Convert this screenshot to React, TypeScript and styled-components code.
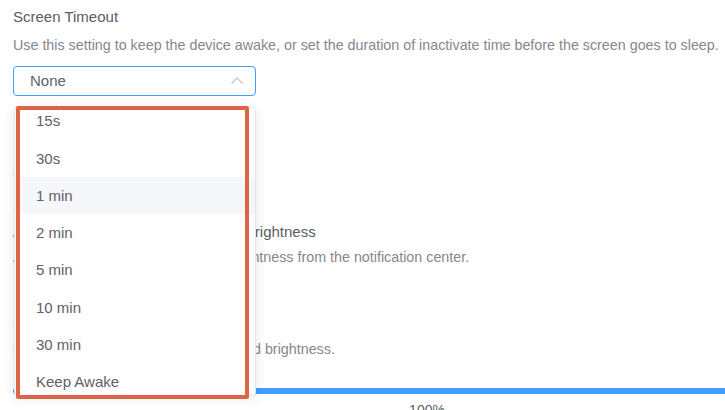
import { useLayoutEffect, useRef } from 'react';
import styled, { createGlobalStyle } from 'styled-components';

const options = ['None', '15s', '30s', '1 min', '2 min', '5 min', '10 min', '30 min', 'Keep Awake'];

export default function App() {
  const wrapRef = useRef<HTMLDivElement>(null);

  useLayoutEffect(() => {
    if (wrapRef.current) wrapRef.current.scrollTop = 49;
  }, []);

  return (
    <>
      <GlobalStyle />
      <Page>
        <Section>
          <Title>Screen Timeout</Title>
          <Desc>
            Use this setting to keep the device awake, or set the duration of inactivate time
            before the screen goes to sleep.
          </Desc>
          <SelectWrap>
            <SelectBox>
              <SelectValue>None</SelectValue>
              <Chevron viewBox="0 0 12 7">
                <polyline points="0.5,6.5 6,1 11.5,6.5" />
              </Chevron>
            </SelectBox>
            <Dropdown>
              <Arrow />
              <OptionsWrap ref={wrapRef}>
                <OptionList>
                  {options.map((o) => (
                    <Option key={o} $hover={o === '1 min'}>
                      {o}
                    </Option>
                  ))}
                </OptionList>
              </OptionsWrap>
            </Dropdown>
          </SelectWrap>
        </Section>

        <Section $top={64}>
          <Title>Screen Brightness</Title>
        </Section>

        <Section $top={36}>
          <Title>Allow the user to adjust the screen brightness</Title>
          <Desc $tight>
            Allows users to adjust the display brightness from the notification center.
          </Desc>
        </Section>

        <Section $top={43}>
          <Title>Default Brightness</Title>
          <Desc $tight>Drag the slider below to set the desired brightness.</Desc>
        </Section>

        <Slider>
          <Track />
          <SliderValue>100%</SliderValue>
        </Slider>

        <Highlight />
      </Page>
    </>
  );
}

const GlobalStyle = createGlobalStyle`
  html, body {
    margin: 0;
    padding: 0;
    background: #ffffff;
    overflow: hidden;
  }

  body {
    font-family: 'Liberation Sans', Arial, Helvetica, sans-serif;
  }
`;

const Page = styled.div`
  position: relative;
  display: flex;
  flex-direction: column;
  width: 828px;
  padding: 5px 0 0 13px;
`;

const Section = styled.div<{ $top?: number }>`
  display: flex;
  flex-direction: column;
  margin-top: ${(p) => p.$top ?? 0}px;
`;

const Title = styled.div`
  font-size: 15px;
  line-height: 24px;
  color: #5a5d64;
  white-space: nowrap;
`;

const Desc = styled.div<{ $tight?: boolean }>`
  margin-top: ${(p) => (p.$tight ? 1 : 4)}px;

  font-size: 14.3px;
  line-height: 24px;
  color: #84878e;
  white-space: nowrap;
`;

const SelectWrap = styled.div`
  position: relative;
  width: 243px;
  margin-top: 9px;
`;

const SelectBox = styled.div`
  display: flex;
  align-items: center;
  justify-content: space-between;
  box-sizing: border-box;
  height: 30px;
  padding: 0 12px 0 16px;

  border: 1px solid #409eff;
  border-radius: 4px;
`;

const SelectValue = styled.span`
  margin-top: -1px;

  font-size: 15px;
  color: #606266;
`;

const Chevron = styled.svg`
  width: 12px;
  height: 7px;
  margin-top: -2px;

  fill: none;
  stroke: #c0c4cc;
  stroke-width: 1.2;
`;

const Dropdown = styled.div`
  position: absolute;
  top: 41px;
  left: 1px;
  z-index: 5;

  box-sizing: border-box;
  width: 242px;
  height: 289px;

  background: #ffffff;
  border: 1px solid #e4e7ed;
  border-radius: 4px;
  box-shadow: 0 2px 12px 0 rgba(0, 0, 0, 0.1);
`;

const Arrow = styled.div`
  position: absolute;
  top: -6px;
  left: 38px;

  width: 0;
  height: 0;
  border-left: 6px solid transparent;
  border-right: 6px solid transparent;
  border-bottom: 6px solid #ebeef5;

  &::after {
    content: '';
    position: absolute;
    top: 1px;
    left: -5px;
    border-left: 5px solid transparent;
    border-right: 5px solid transparent;
    border-bottom: 5px solid #ffffff;
  }
`;

const OptionsWrap = styled.div`
  height: 100%;
  overflow: hidden;
  border-radius: 4px;
`;

const OptionList = styled.ul`
  margin: 0;
  padding: 6px 0;
  list-style: none;
`;

const Option = styled.li<{ $hover?: boolean }>`
  box-sizing: border-box;
  height: 37.25px;
  padding: 0 21px;

  font-size: 15px;
  line-height: 37.25px;
  color: #606266;
  background: ${(p) => (p.$hover ? '#f5f7fa' : 'transparent')};
`;

const Slider = styled.div`
  display: flex;
  flex-direction: column;
  align-items: center;
  margin-top: 27px;
`;

const Track = styled.div`
  align-self: stretch;
  height: 6px;

  background: #409eff;
  border-radius: 3px;
`;

const SliderValue = styled.div`
  margin-top: 6px;

  font-size: 14px;
  line-height: 20px;
  color: #606266;
`;

const Highlight = styled.div`
  position: absolute;
  top: 106px;
  left: 16px;
  z-index: 10;

  box-sizing: border-box;
  width: 233px;
  height: 293px;

  border: 4px solid #dd6446;
  border-radius: 2px;
`;
